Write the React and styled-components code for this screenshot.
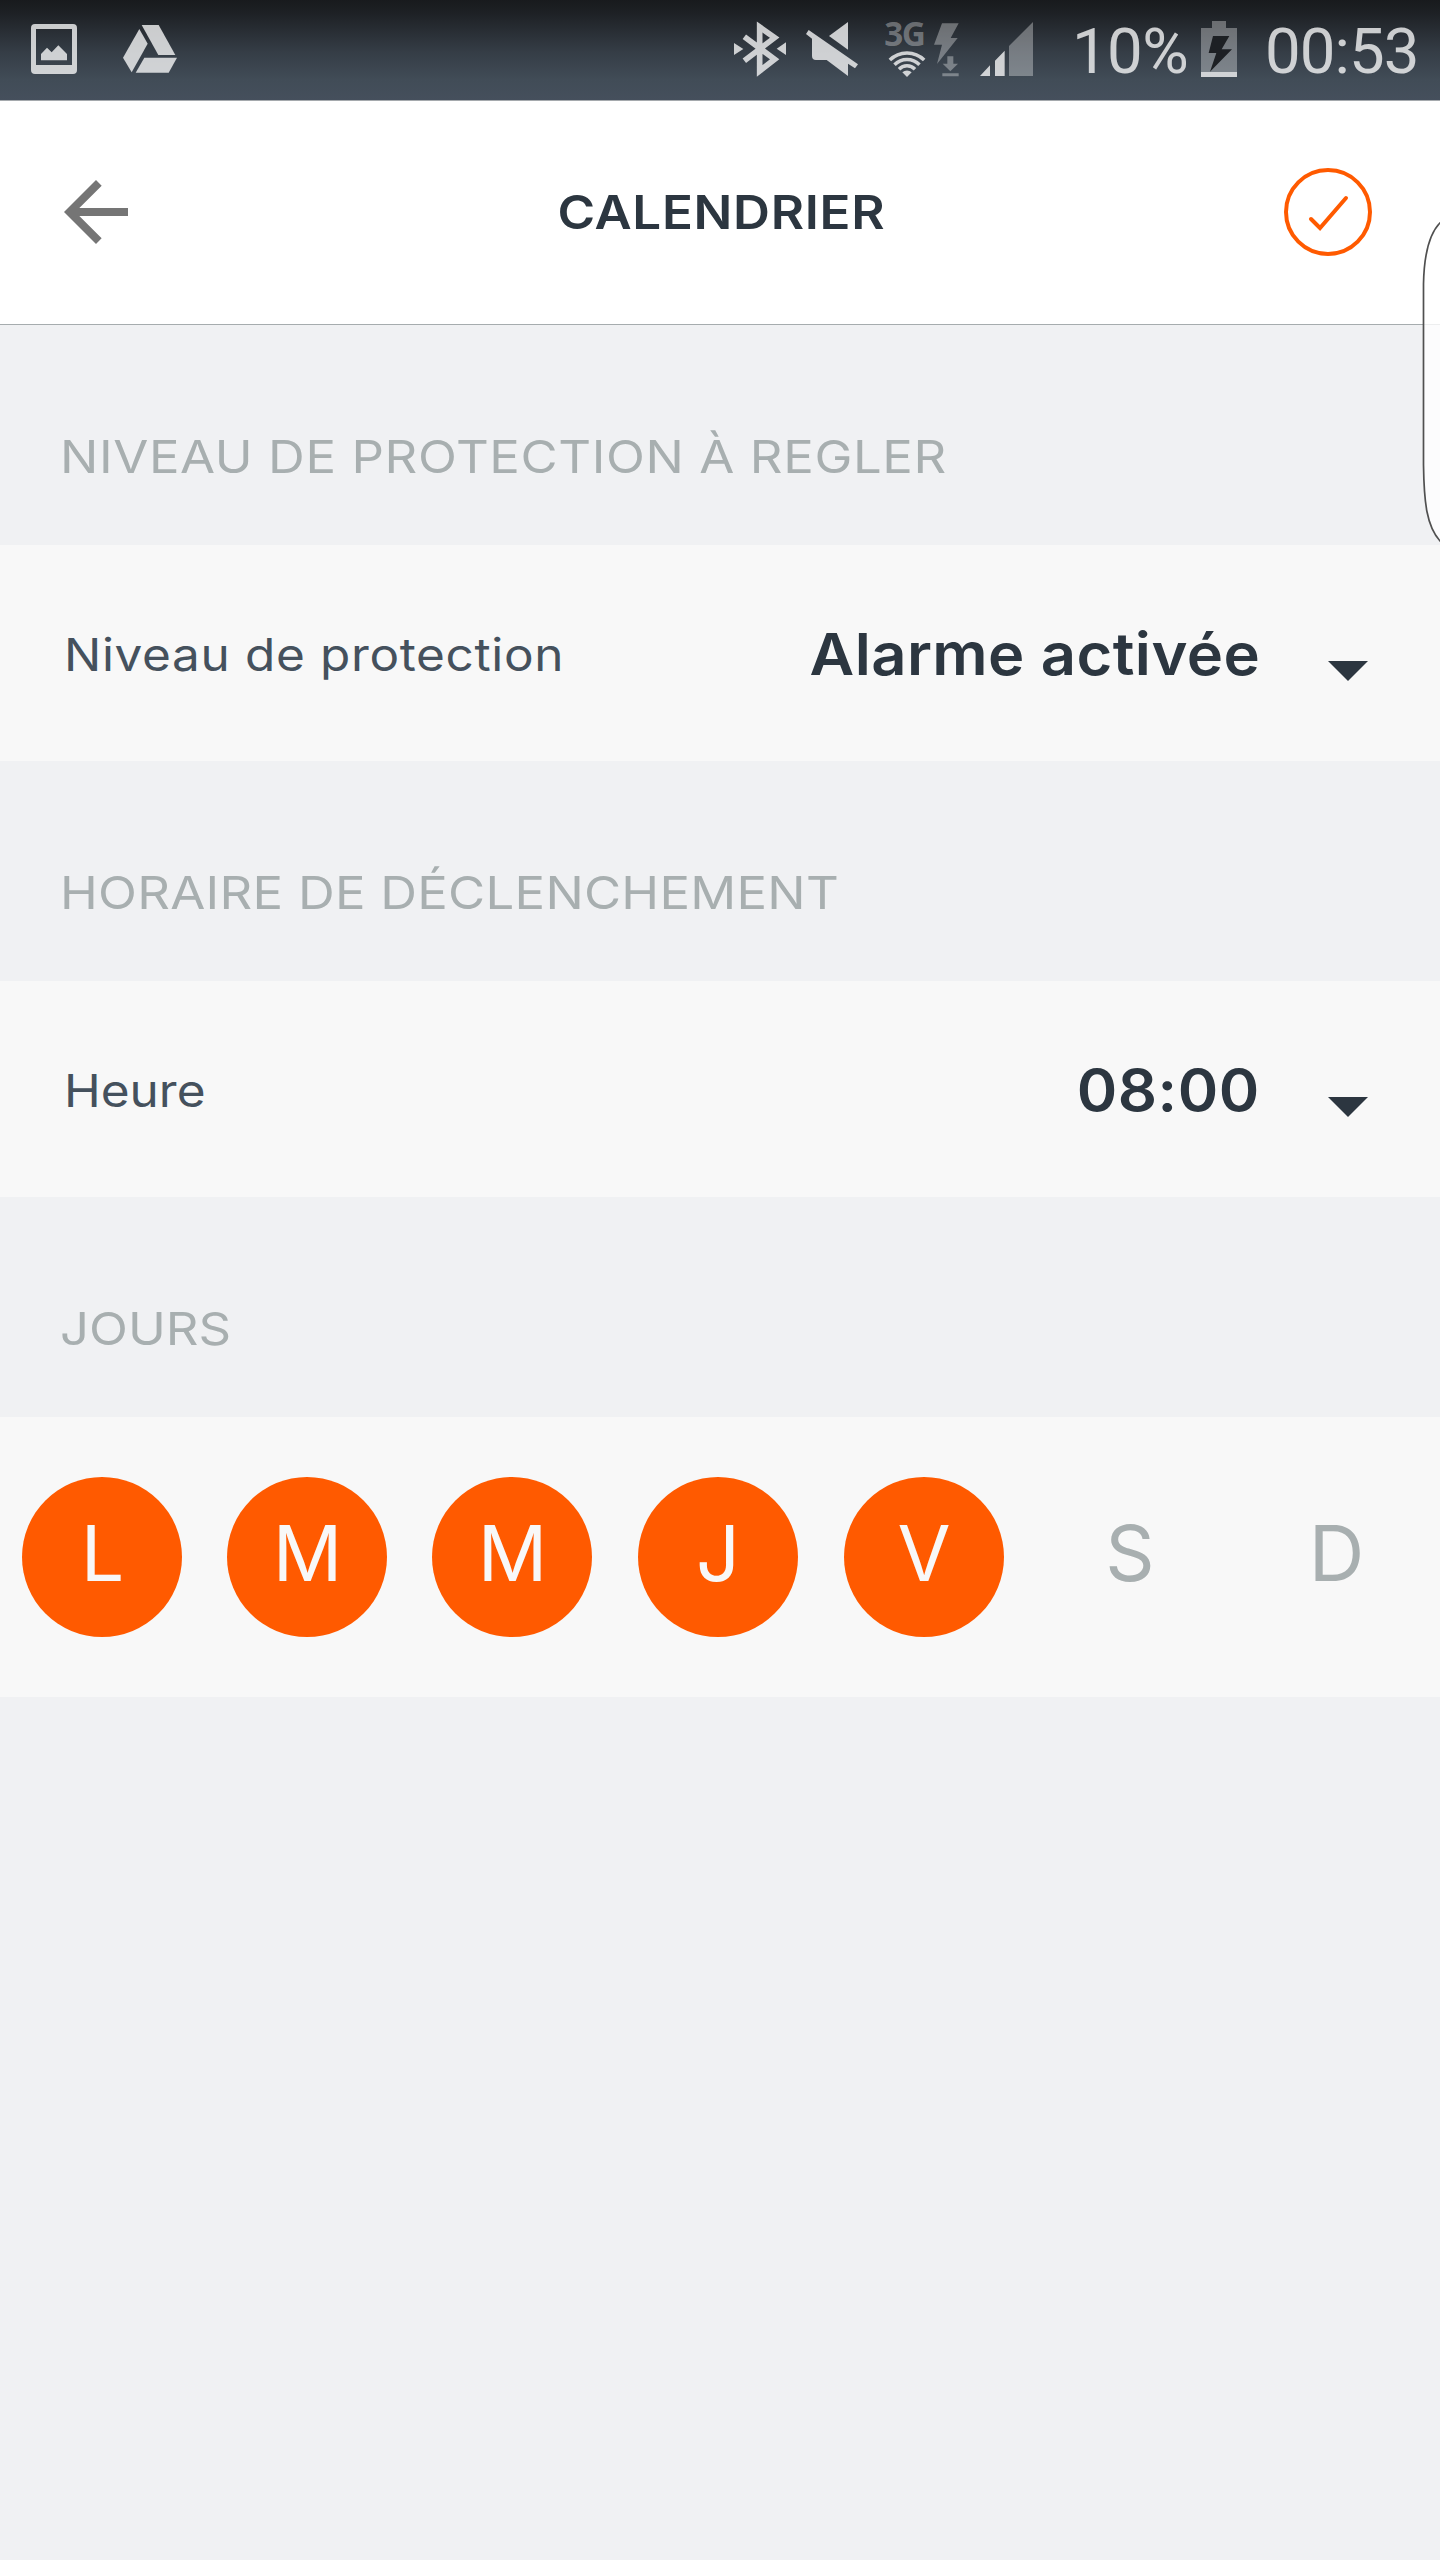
import React, { useState } from 'react'
import styled, { createGlobalStyle } from 'styled-components'

const sections = {
    level: 'NIVEAU DE PROTECTION À REGLER',
    time: 'HORAIRE DE DÉCLENCHEMENT',
    days: 'JOURS'
}

const week = [
    { id: 'lun', letter: 'L', on: true },
    { id: 'mar', letter: 'M', on: true },
    { id: 'mer', letter: 'M', on: true },
    { id: 'jeu', letter: 'J', on: true },
    { id: 'ven', letter: 'V', on: true },
    { id: 'sam', letter: 'S', on: false },
    { id: 'dim', letter: 'D', on: false }
]

const bright = 'rgba(255,255,255,.76)'
const faded = 'rgba(255,255,255,.33)'

const PictureIcon = () => (
    <svg width="46" height="50" viewBox="0 0 138 150" fill={bright}>
        <path fillRule="evenodd" d="M12 0H126Q138 0 138 12V138Q138 150 126 150H12Q0 150 0 138V12Q0 0 12 0ZM15 15V123H123V15Z" />
        <path d="M30 109V90L48 71L62 85L82 64L108 90V109Z" />
    </svg>
)

const DriveIcon = () => (
    <svg width="54" height="48" viewBox="0 0 162 144" fill={bright}>
        <path d="M56 0H107L157 90H106Z" />
        <path d="M49 12L74 56L26 142L0 98Z" />
        <path d="M64 98H162L137 143H38Z" />
    </svg>
)

const BluetoothIcon = () => (
    <svg width="52" height="56" viewBox="0 0 156 168">
        <path d="M31 47L122 115L77 150V18L122 50L31 119" fill="none" stroke={bright} strokeWidth="17" />
        <path d="M0 66L28 84L0 102ZM156 64V102L128 83Z" fill={bright} />
    </svg>
)

const MuteIcon = () => (
    <svg width="52" height="56" viewBox="0 0 156 168" fill={bright}>
        <path d="M126 3V86L69 45Z" />
        <path d="M8 27L156 130L147 142L126 128V165L62 117H30Q18 117 18 105V53L0 39Z" />
    </svg>
)

const NetworkIcon = () => (
    <Network width="74" height="56" viewBox="0 0 222 168">
        <text x="-2" y="75" fontFamily="Open Sans, sans-serif" fontSize="100" fontWeight="700" textLength="125" fill={faded}>3G</text>
        <g fill="none" stroke={bright} strokeWidth="10.5">
            <path d="M14.5 117A73 73 0 0 1 117.5 117" />
            <path d="M28.5 131A53 53 0 0 1 103.5 131" />
            <path d="M42 144.500A34 34 0 0 1 90 144.500" />
        </g>
        <path d="M66 168L52 154A20 20 0 0 1 80 154Z" fill={bright} />
        <path d="M171 7H221L197 51H218L156 129L171 71H147Z" fill={faded} />
        <path d="M187 106H205V128H219L196 151L173 128H187ZM172 157H221V166H172Z" fill={faded} />
    </Network>
)

const SignalIcon = () => (
    <svg width="53" height="54" viewBox="0 0 159 162">
        <path d="M0 162L30 130V162ZM45 162V116L74 86V162Z" fill={bright} />
        <path d="M87 162V72L159 0V162Z" fill={faded} />
    </svg>
)

const BatteryIcon = () => (
    <svg width="36" height="56" viewBox="0 0 108 168">
        <path d="M33 0H75V21H108V153H0V21H33Z" fill={faded} />
        <path d="M0 153H108V168H0Z" fill={bright} />
        <path d="M36 45H85L62 85H93L27 152L46 96H23Z" fill="#1d2024" />
    </svg>
)

const BackIcon = () => (
    <svg width="64" height="64" viewBox="4 4 16 16" fill="#757575">
        <path d="M20 11H7.830l5.590-5.590L12 4l-8 8 8 8 1.410-1.410L7.830 13H20v-2z" />
    </svg>
)

const CheckIcon = () => (
    <svg width="88" height="88" viewBox="0 0 88 88" fill="none" stroke="#ff5a00" strokeWidth="4">
        <circle cx="44" cy="44" r="42" />
        <path d="M27 51L36 60L62 30" strokeLinecap="round" />
    </svg>
)

const EdgeHandle = () => (
    <Handle width="18" height="324" viewBox="0 0 18 324">
        <path
            d="M20 1C6 13 2 38 1.500 64V245C2 280 4 308 20 323"
            fill="rgba(255,255,255,.8)"
            stroke="#505050"
            strokeWidth="1.7"
        />
    </Handle>
)

export default function App() {
    const [days, setDays] = useState(week)

    const toggle = (id) => {
        setDays(days.map((day) => day.id === id ? { ...day, on: !day.on } : day))
    }

    return (
    <Screen>
      <GlobalStyle />
      <StatusBar>
          <Notifications>
              <PictureIcon />
              <DriveIcon />
          </Notifications>
          <System>
              <BluetoothIcon />
              <MuteIcon />
              <NetworkIcon />
              <SignalIcon />
          </System>
          <Percent>10%</Percent>
          <BatteryIcon />
          <Clock>00:53</Clock>
      </StatusBar>
      <Header>
          <IconButton aria-label="Retour"><BackIcon /></IconButton>
          <Title>CALENDRIER</Title>
          <IconButton aria-label="Valider"><CheckIcon /></IconButton>
      </Header>
      <SectionTitle><Wide $track=".55px">{sections.level}</Wide></SectionTitle>
      <Row>
          <Label $track=".6px">Niveau de protection</Label>
          <Select>
              <Value $track=".4px">Alarme activée</Value>
              <Caret />
          </Select>
      </Row>
      <SectionTitle><Wide $track=".25px">{sections.time}</Wide></SectionTitle>
      <Row>
          <Label $track="0">Heure</Label>
          <Select>
              <Value $track=".5px">08:00</Value>
              <Caret />
          </Select>
      </Row>
      <SectionTitle><Wide $track="0">{sections.days}</Wide></SectionTitle>
      <Week>
          {days.map((day) => (
              <Day key={day.id} $on={day.on} onClick={() => toggle(day.id)}>
                  <Letter>{day.letter}</Letter>
              </Day>
          ))}
      </Week>
      <EdgeHandle />
    </Screen>
  )
}

const GlobalStyle = createGlobalStyle`
* {
    box-sizing: border-box;
}
body {
    margin: 0;
    background: #f0f1f3;
}
svg {
    display: block;
    flex: none;
}
`
const Screen = styled.div`
position: relative;
width: 1440px;
height: 2560px;
overflow: hidden;
background: #f0f1f3;
font-family: Inter, 'Liberation Sans', sans-serif;
`
const StatusBar = styled.div`
display: flex;
align-items: center;
height: 101px;
padding: 0 20px 2px 31px;
border-bottom: 1px solid #a5a9ad;
background: linear-gradient(#181a1d 0, #1d2024 12px, #353d46 52px, #414c57 80px, #454f5c 100px);
`
const Notifications = styled.div`
display: flex;
align-items: center;
gap: 46px;
margin-right: auto;
`
const System = styled.div`
display: flex;
align-items: center;
gap: 21px;
margin-right: 39px;

svg:nth-child(2) {
    margin-left: -1px;
    margin-right: 6px;
}
`
const Network = styled.svg`
overflow: visible;
`
const StatusText = styled.span`
font-family: Roboto, sans-serif;
font-size: 63.5px;
font-weight: 400;
line-height: 98px;
padding-top: 5px;
color: rgba(255,255,255,.76);
white-space: nowrap;
`
const Percent = styled(StatusText)`
width: 129px;
letter-spacing: -.6px;
`
const Clock = styled(StatusText)`
width: 155px;
margin-left: 28px;
letter-spacing: -.9px;
`
const Header = styled.header`
display: grid;
grid-template-columns: 88px 1fr 88px;
align-items: center;
height: 224px;
padding: 0 68px 1px 64px;
border-bottom: 1px solid #a6acae;
background: #fff;
`
const IconButton = styled.button`
padding: 0;
border: 0;
background: none;
`
const Title = styled.h1`
margin: 0;
padding-left: 6px;
font-size: 46.5px;
font-weight: 560;
letter-spacing: .6px;
text-align: center;
color: #2c3640;
transform: scaleX(1.1);
`
const SectionTitle = styled.h2`
display: flex;
align-items: center;
height: 220px;
margin: 0;
padding: 43px 60px 0;
font-size: 45.4px;
font-weight: 400;
color: #a8afb0;
`
const Wide = styled.span`
letter-spacing: ${(props) => props.$track};
white-space: nowrap;
transform: scaleX(1.12);
transform-origin: left;
`
const Row = styled.div`
display: flex;
align-items: center;
justify-content: space-between;
height: 216px;
padding: 3px 72px 0 64px;
background: #f8f8f8;
`
const Label = styled.span`
font-size: 45.4px;
letter-spacing: ${(props) => props.$track};
color: #45515d;
transform: scaleX(1.09);
transform-origin: left;
`
const Select = styled.div`
display: flex;
align-items: center;
gap: 68px;
`
const Value = styled.span`
padding-bottom: 2px;
font-size: 58px;
font-weight: 560;
letter-spacing: ${(props) => props.$track};
color: #2c3640;
transform: scaleX(1.06);
transform-origin: right;
`
const Caret = styled.span`
margin-top: 33px;
border: 20px solid transparent;
border-top-color: #2c3640;
border-bottom: 0;
`
const Week = styled.div`
display: grid;
grid-template-columns: repeat(3, 205px) repeat(3, 206px) 207px;
place-items: center;
height: 280px;
padding-right: 2px;
background: #f8f8f8;
`
const Day = styled.button`
display: flex;
align-items: center;
justify-content: center;
width: 160px;
height: 160px;
margin-left: -1px;
padding: 0 0 8px 1px;
border: 0;
border-radius: 50%;
background: ${(props) => props.$on ? '#ff5a00' : 'transparent'};
color: ${(props) => props.$on ? '#f8f8f8' : '#a8afb0'};
font-family: inherit;
font-size: 77px;
font-weight: 400;
`
const Letter = styled.span`
line-height: 1;
`
// sits over the right border of the whole screen
const Handle = styled.svg`
position: absolute;
top: 220px;
right: 0;
`
